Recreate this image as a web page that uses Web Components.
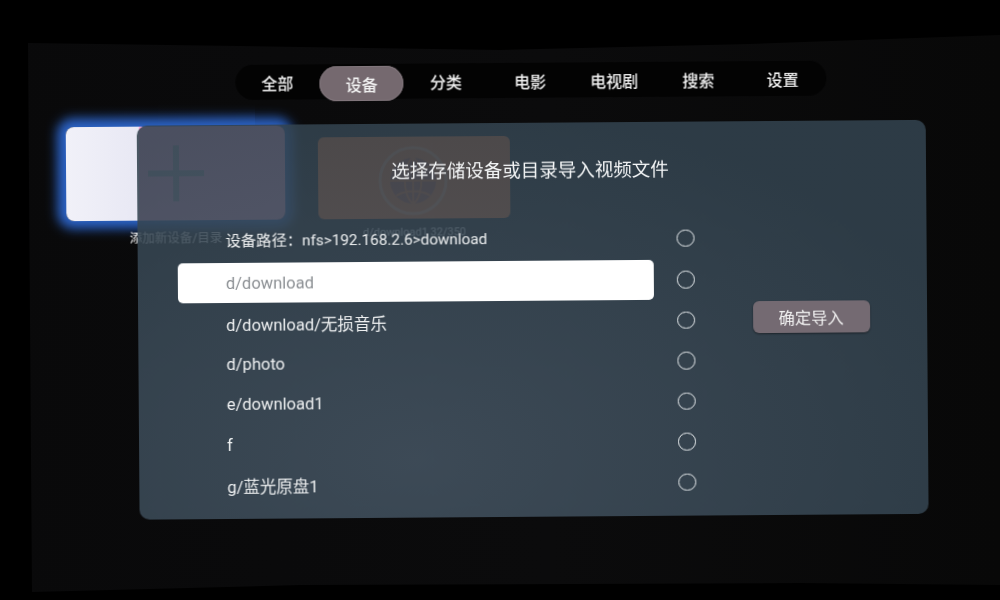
<!DOCTYPE html>
<html lang="zh-CN">
<head>
<meta charset="utf-8">
<title>导入视频文件</title>
<style>
html, body { margin: 0; height: 100%; background: #000; overflow: hidden; }
</style>
</head>
<body>
<tv-screen>
    <nav-bar slot="nav">
        <nav-item>全部</nav-item>
        <nav-item active>设备</nav-item>
        <nav-item>分类</nav-item>
        <nav-item>电影</nav-item>
        <nav-item>电视剧</nav-item>
        <nav-item>搜索</nav-item>
        <nav-item>设置</nav-item>
    </nav-bar>
    <media-card slot="cards" kind="add" label="添加新设备/目录"></media-card>
    <media-card slot="cards" kind="disc" label="d/download1 32/350"></media-card>
    <import-dialog slot="dialog" heading="选择存储设备或目录导入视频文件" action="确定导入">
        <dir-row header>设备路径：nfs&gt;192.168.2.6&gt;download</dir-row>
        <dir-row selected>d/download</dir-row>
        <dir-row>d/download/无损音乐</dir-row>
        <dir-row>d/photo</dir-row>
        <dir-row>e/download1</dir-row>
        <dir-row>f</dir-row>
        <dir-row>g/蓝光原盘1</dir-row>
    </import-dialog>
</tv-screen>

<script>
const FONT = '"Roboto", "Noto Sans CJK SC", sans-serif';

class TvScreen extends HTMLElement {
    constructor() {
        super();
        this.attachShadow({mode: 'open'}).innerHTML = `
        <style>
        :host {
            display: block;
            position: relative;
            width: 1000px;
            height: 600px;
            font-family: ${FONT};
        }
        /* the projected picture is slightly bowed, so its edge is not a plain box */
        .backdrop {
            position: absolute;
            inset: 0;
            background: linear-gradient(90deg, #09090a 0%, #0b0b0c 55%, #080808 100%);
            clip-path: polygon(28px 43px, 300px 47px, 500px 50px, 750px 44px, 1000px 35px,
                1000px 585px, 800px 583px, 300px 585px, 32px 592px);
        }
        .content {
            position: relative;
            box-sizing: border-box;
            height: 100%;
            padding: 43px 14px 10px 28px;
            transform: rotate(-0.42deg);
            filter: blur(0.35px);
        }
        .nav {
            display: flex;
            padding: 20px 0 0 209px;
        }
        .cards {
            display: flex;
            align-items: flex-start;
            gap: 33px;
            padding: 26px 0 0 39px;
        }
        ::slotted(import-dialog) {
            position: absolute;
            left: 138px;
            top: 123px;
        }
        </style>
        <div class="backdrop"></div>
        <div class="content">
            <div class="nav"><slot name="nav"></slot></div>
            <div class="cards"><slot name="cards"></slot></div>
            <slot name="dialog"></slot>
        </div>`;
    }
}

class NavBar extends HTMLElement {
    constructor() {
        super();
        this.attachShadow({mode: 'open'}).innerHTML = `
        <style>
        :host {
            display: flex;
            align-items: flex-start;
            height: 35px;
            padding-right: 2px;
            border-radius: 18px;
            background: #030303;
        }
        </style>
        <slot></slot>`;
    }
}

class NavItem extends HTMLElement {
    constructor() {
        super();
        this.attachShadow({mode: 'open'}).innerHTML = `
        <style>
        :host {
            display: flex;
            align-items: center;
            justify-content: center;
            width: 84.2px;
            height: 35px;
            border-radius: 18px;
            color: #f2f2f2;
            font-size: 16px;
            font-weight: 500;
        }
        :host([active]) {
            margin-top: 2px;
            background: #75696f;
            box-shadow: inset 0 0 0 1px #82777d;
        }
        </style>
        <slot></slot>`;
    }
}

class MediaCard extends HTMLElement {
    connectedCallback() {
        const add = this.getAttribute('kind') === 'add';
        const label = this.getAttribute('label');
        const art = add
            ? `<svg width="58" height="58" viewBox="0 0 58 58"><path d="M29 1v56M1 29h56" stroke="#a4a4b4" stroke-width="6" fill="none"/></svg>`
            : `<svg width="72" height="72" viewBox="0 0 72 72" fill="none">
                <circle cx="36" cy="36" r="33" stroke="#ff9a60" stroke-width="3"/>
                <circle cx="36" cy="36" r="23" fill="#c05030"/>
                <path d="M13 36h46M36 13v46M19 21c10 6 24 6 34 0M19 51c10-6 24-6 34 0M36 13c-11 7-11 39 0 46M36 13c11 7 11 39 0 46" stroke="#ff7020" stroke-width="1.8"/>
               </svg>`;
        this.attachShadow({mode: 'open'}).innerHTML = `
        <style>
        :host {
            display: flex;
            flex-direction: column;
            align-items: center;
            gap: 9px;
        }
        /* the right part only ever shows through the dialog, it gives the tint seen there */
        .thumb {
            display: flex;
            align-items: center;
            justify-content: center;
            box-sizing: border-box;
            width: 219px;
            height: 94px;
            border-radius: 8px;
            background: linear-gradient(90deg, #f1f1f8 0, #e8e8f4 73.5px, #ffb0e0 73.5px);
            box-shadow: 0 0 11px 8px #2b62c4;
        }
        :host([kind="disc"]) { gap: 5px; }
        :host([kind="disc"]) .thumb {
            width: 192px;
            height: 82px;
            margin-top: 12px;
            padding: 6px 3px 0 0;
            border-radius: 6px;
            background: #ff7020;
            box-shadow: none;
        }
        .label {
            font-size: 12.5px;
            line-height: 18px;
            white-space: nowrap;
            color: #fff;
        }
        :host([kind="disc"]) .label { font-size: 11px; }
        </style>
        <div class="thumb">${art}</div>
        <div class="label">${label}</div>`;
    }
}

class ImportDialog extends HTMLElement {
    connectedCallback() {
        this.attachShadow({mode: 'open'}).innerHTML = `
        <style>
        :host {
            display: block;
            box-sizing: border-box;
            width: 789px;
            height: 394px;
            padding: 0 0 0 40px;
            border-radius: 10px;
            background: radial-gradient(ellipse 75% 90% at 35% 85%, rgba(68,83,97,.88), rgba(50,66,78,.88));
        }
        h2 {
            display: flex;
            align-items: center;
            justify-content: center;
            height: 91px;
            margin: 0 0 4px -40px;
            padding-right: 3px;
            color: #f4f6f7;
            font-size: 18.5px;
            font-weight: 400;
        }
        .body { display: flex; }
        .list { display: flex; flex-direction: column; }
        button {
            width: 117px;
            height: 32px;
            margin: 85px 0 0 58px;
            padding: 0;
            border: 0;
            border-radius: 6px;
            background: #746a72;
            box-shadow: 0 1px 2px rgba(0,0,0,.45);
            color: #f4f4f4;
            font: 400 16.3px ${FONT};
        }
        </style>
        <h2>${this.getAttribute('heading')}</h2>
        <div class="body">
            <div class="list"><slot></slot></div>
            <button>${this.getAttribute('action')}</button>
        </div>`;
    }
}

class DirRow extends HTMLElement {
    constructor() {
        super();
        this.attachShadow({mode: 'open'}).innerHTML = `
        <style>
        :host {
            display: flex;
            align-items: center;
            gap: 23px;
            height: 40.5px;
        }
        :host([header]) { height: 42.7px; }
        .name {
            display: flex;
            align-items: center;
            box-sizing: border-box;
            width: 476px;
            height: 100%;
            padding: 1px 0 0 48px;
            border-radius: 5px;
            color: #eef0f1;
            font-size: 16.5px;
            white-space: nowrap;
        }
        :host([header]) .name {
            padding: 0 0 4px 48px;
            font-size: 15.3px;
        }
        :host([selected]) .name {
            background: #fff;
            color: #8b8f93;
        }
        .radio {
            width: 15.5px;
            height: 15.5px;
            border: 1.6px solid #e8ecee;
            border-radius: 50%;
        }
        </style>
        <div class="name"><slot></slot></div>
        <div class="radio"></div>`;
    }
}

customElements.define('tv-screen', TvScreen);
customElements.define('nav-bar', NavBar);
customElements.define('nav-item', NavItem);
customElements.define('media-card', MediaCard);
customElements.define('import-dialog', ImportDialog);
customElements.define('dir-row', DirRow);
</script>
</body>
</html>
